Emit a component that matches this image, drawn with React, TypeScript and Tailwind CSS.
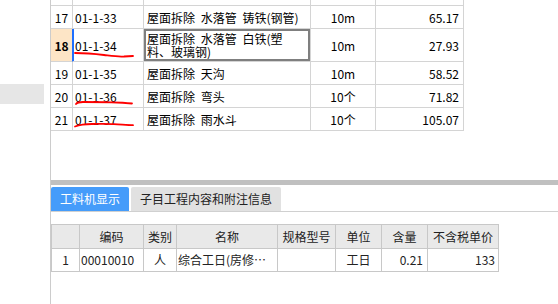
import React from "react";

// Top grid rows (quota list)
const topRows = [
  { no: "17", code: "01-1-33", name: "屋面拆除 水落管 铸铁(钢管)", unit: "10m", price: "65.17" },
  { no: "18", code: "01-1-34", name: "屋面拆除 水落管 白铁(塑\n料、玻璃钢)", unit: "10m", price: "27.93", active: true },
  { no: "19", code: "01-1-35", name: "屋面拆除 天沟", unit: "10m", price: "58.52" },
  { no: "20", code: "01-1-36", name: "屋面拆除 弯头", unit: "10个", price: "71.82" },
  { no: "21", code: "01-1-37", name: "屋面拆除 雨水斗", unit: "10个", price: "105.07" },
];

const bottomHeaders = ["", "编码", "类别", "名称", "规格型号", "单位", "含量", "不含税单价"];

export default function App() {
  const cell = "border-r border-b border-[#d4d4d4] flex items-center";
  const bcell = "border-r border-b border-[#c8c8c8] flex items-center";

  return (
    <div
      className="relative w-[558px] h-[304px] bg-white flex overflow-hidden text-black text-[12px]"
      style={{ fontFamily: '"Noto Sans CJK SC", "Liberation Sans", sans-serif' }}
    >
      {/* Left side panel */}
      <div className="w-[50px] shrink-0">
        <div className="mt-[84px] h-[20px] w-[44px] bg-[#e6e6e6]" />
      </div>

      {/* Main area */}
      <div className="flex-1 flex flex-col border-l border-[#cccccc]">
        {/* Top grid */}
        <div className="h-[180px] overflow-hidden">
          <div className="grid grid-cols-[22px_71px_167px_65px_88px] w-[413px] leading-[13px]">
            <div className={`${cell} h-[6px]`} />
            <div className={`${cell} h-[6px]`} />
            <div className={`${cell} h-[6px]`} />
            <div className={`${cell} h-[6px]`} />
            <div className={`${cell} h-[6px]`} />
            {topRows.map((r) => {
              const h = r.active ? "h-[33px]" : "h-[23px]";
              return (
                <React.Fragment key={r.no}>
                  <div
                    className={`${cell} ${h} justify-center ${
                      r.active ? "bg-[#fde5c6] font-bold border-r-[#1f6fff]" : ""
                    }`}
                  >
                    {r.no}
                  </div>
                  <div
                    className={`${cell} ${h} pl-[2px] ${
                      r.active ? "shadow-[inset_1px_0_0_#1f6fff]" : ""
                    }`}
                  >
                    {r.code}
                  </div>
                  <div
                    className={`${cell} ${h} pl-[3px] pr-[4px] whitespace-pre-line [word-spacing:3px] ${
                      r.active ? "shadow-[inset_0_0_0_2px_#7f7f7f]" : ""
                    }`}
                  >
                    {r.name}
                  </div>
                  <div className={`${cell} ${h} justify-center`}>{r.unit}</div>
                  <div className={`${cell} ${h} justify-end pr-[4px]`}>{r.price}</div>
                </React.Fragment>
              );
            })}
          </div>
        </div>

        {/* Splitter */}
        <div className="h-[5px] bg-[#c0c0c0]" />

        {/* Tabs */}
        <div className="pt-[2px] flex gap-[2px] border-b border-[#d0d0d0]">
          <div className="h-[24px] px-[9px] flex items-center bg-[#459cfa] text-white rounded-t-[2px]">
            工料机显示
          </div>
          <div className="h-[24px] px-[9px] flex items-center bg-[#e1e1e1] text-[#222] rounded-t-[2px]">
            子目工程内容和附注信息
          </div>
        </div>

        {/* Bottom grid */}
        <div className="mt-[12px] w-[448px] border-t border-l border-[#c8c8c8] grid grid-cols-[28px_64px_33px_101px_58px_46px_46px_71px] text-[#222]">
          {bottomHeaders.map((t, i) => (
            <div key={i} className={`${bcell} h-[24px] justify-center bg-[#e9e9e9]`}>
              {t}
            </div>
          ))}
          <div className={`${bcell} h-[23px] justify-center`}>1</div>
          <div className={`${bcell} h-[23px] pl-[1px]`}>00010010</div>
          <div className={`${bcell} h-[23px] justify-center`}>人</div>
          <div className={`${bcell} h-[23px] pl-[1px] whitespace-nowrap overflow-hidden`}>综合工日(房修…</div>
          <div className={`${bcell} h-[23px]`} />
          <div className={`${bcell} h-[23px] justify-center`}>工日</div>
          <div className={`${bcell} h-[23px] justify-end pr-[4px]`}>0.21</div>
          <div className={`${bcell} h-[23px] justify-end pr-[3px]`}>133</div>
        </div>
      </div>

      {/* Hand-drawn red marks */}
      <svg
        className="absolute left-0 top-0 pointer-events-none"
        width="558"
        height="180"
        viewBox="0 0 558 180"
        fill="none"
        stroke="#ff0000"
        strokeWidth="1.8"
        strokeLinecap="round"
      >
        <path d="M75 53 C88 53 96 54 104 55 C112 56 118 57 124 56.5 C128 56 131 56 133 56" />
        <path d="M76 104 C77 102.5 79 102 83 102 C95 102 115 102 132 103.5" />
        <path d="M75 126.5 C79 125 84 124 92 124 C100 124 108 123.8 114 124.2 C122 124.6 128 125.2 133 125.2" />
      </svg>
    </div>
  );
}
